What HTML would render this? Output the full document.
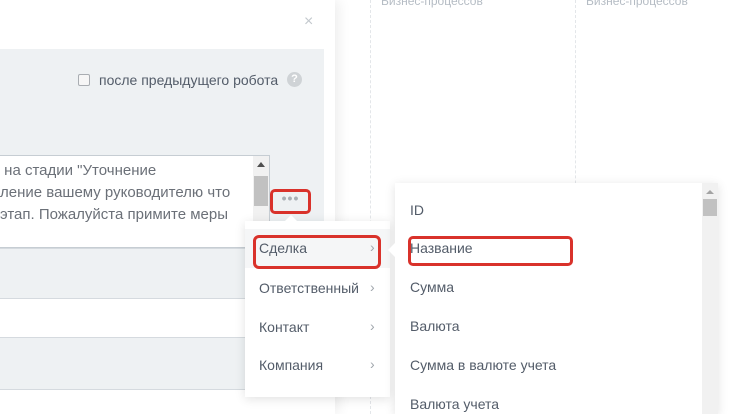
<!DOCTYPE html>
<html><head><meta charset="utf-8"><style>
*{margin:0;padding:0;box-sizing:border-box}
html,body{width:744px;height:414px;overflow:hidden}
body{background:#fff;font-family:"Liberation Sans",Arial,sans-serif;position:relative}
.abs{position:absolute}
.t{color:#535c69;font-size:14px}
.ch{position:absolute;left:370px;color:#a0a6ac;font-size:14px}
</style></head><body>
<div class="abs" style="left:370px;top:0;width:0;height:414px;border-left:1px dashed #e3e6e9"></div>
<div class="abs" style="left:575px;top:0;width:0;height:414px;border-left:1px dashed #e3e6e9"></div>
<div class="abs" style="left:381px;top:-6px;font-size:12px;color:#b5bcc4">Бизнес-процессов</div>
<div class="abs" style="left:586px;top:-6px;font-size:12px;color:#b5bcc4">Бизнес-процессов</div>
<div class="abs" style="left:0;top:0;width:335px;height:414px;background:#fff;box-shadow:4px 0 12px rgba(0,0,0,.07)"></div>
<div class="abs" style="left:304px;top:13px;color:#c3c8cd;font-size:16px">×</div>
<div class="abs" style="left:0;top:49px;width:324px;height:365px;background:#eef1f3"></div>
<div class="abs" style="left:78px;top:74px;width:12px;height:12px;border:1px solid #a9adb2;border-radius:2px;background:#f6f6f6"></div>
<div class="abs t" style="left:99px;top:72px;font-size:14px">после предыдущего робота</div>
<div class="abs" style="left:287px;top:72px;width:15px;height:15px;border-radius:50%;background:#cfd3d6;color:#fff;font-size:11px;font-weight:bold;text-align:center;line-height:15px">?</div>
<div class="abs" style="left:-2px;top:155px;width:272px;height:93px;background:#fff;border:1px solid #c6cdd3"></div>
<div class="abs" style="left:0;top:160px;color:#6b7078;font-size:15px;line-height:22px">&nbsp;на стадии "Уточнение<br>ление вашему руководителю что<br>этап. Пожалуйста примите меры</div>
<div class="abs" style="left:253px;top:156px;width:16px;height:91px;background:#f1f1f1"></div>
<div class="abs" style="left:257px;top:162px;border-left:4px solid transparent;border-right:4px solid transparent;border-bottom:5px solid #505050"></div>
<div class="abs" style="left:254px;top:176px;width:14px;height:30px;background:#c1c1c1"></div>
<div class="abs" style="left:0;top:248px;width:324px;height:51px;background:#eef1f3;border-top:1px solid #d5dadf;border-bottom:1px solid #d5dadf"></div>
<div class="abs" style="left:0;top:299px;width:324px;height:38px;background:#fff"></div>
<div class="abs" style="left:0;top:337px;width:324px;height:53px;background:#eef1f3;border-top:1px solid #d5dadf;border-bottom:1px solid #d5dadf"></div>
<div class="abs" style="left:0;top:390px;width:324px;height:24px;background:#fff"></div>
<div class="abs" style="left:270px;top:189px;width:41px;height:25px;border:3px solid #d9322b;border-radius:5px;background:#eef1f3;color:#a8aeb4;text-align:center;font-size:14px;line-height:12px;letter-spacing:1px;font-weight:bold">•••</div>
<div class="abs" style="left:245px;top:221px;width:145px;height:176px;background:#fff;box-shadow:0 2px 10px rgba(0,0,0,.12)"></div>
<div class="abs" style="left:284px;top:215px;border-left:7px solid transparent;border-right:7px solid transparent;border-bottom:7px solid #fff"></div>
<div class="abs" style="left:245px;top:229px;width:145px;height:39px;background:#f5f6f7"></div>
<div class="abs" style="left:253px;top:235px;width:128px;height:34px;border:3px solid #d9322b;border-radius:6px"></div>
<div class="abs t" style="left:259px;top:240px">Сделка</div>
<div class="abs t" style="left:259px;top:280px">Ответственный</div>
<div class="abs t" style="left:259px;top:319px">Контакт</div>
<div class="abs t" style="left:259px;top:357px">Компания</div>
<div class="ch" style="top:239px">›</div>
<div class="ch" style="top:279px">›</div>
<div class="ch" style="top:318px">›</div>
<div class="ch" style="top:356px">›</div>
<div class="abs" style="left:395px;top:183px;width:323px;height:231px;background:#fff;box-shadow:0 2px 10px rgba(0,0,0,.12)"></div>
<div class="abs" style="left:388px;top:242px;border-top:8px solid transparent;border-bottom:8px solid transparent;border-right:8px solid #fff"></div>
<div class="abs" style="left:702px;top:183px;width:16px;height:231px;background:#f1f1f1"></div>
<div class="abs" style="left:706px;top:190px;border-left:4px solid transparent;border-right:4px solid transparent;border-bottom:4px solid #a3a3a3"></div>
<div class="abs" style="left:703px;top:199px;width:14px;height:17px;background:#c1c1c1"></div>
<div class="abs t" style="left:410px;top:202px">ID</div>
<div class="abs" style="left:408px;top:236px;width:165px;height:30px;border:3px solid #d9322b;border-radius:5px"></div>
<div class="abs t" style="left:410px;top:240px">Название</div>
<div class="abs t" style="left:410px;top:279px">Сумма</div>
<div class="abs t" style="left:410px;top:318px">Валюта</div>
<div class="abs t" style="left:410px;top:357px">Сумма в валюте учета</div>
<div class="abs t" style="left:410px;top:396px">Валюта учета</div>
</body></html>
